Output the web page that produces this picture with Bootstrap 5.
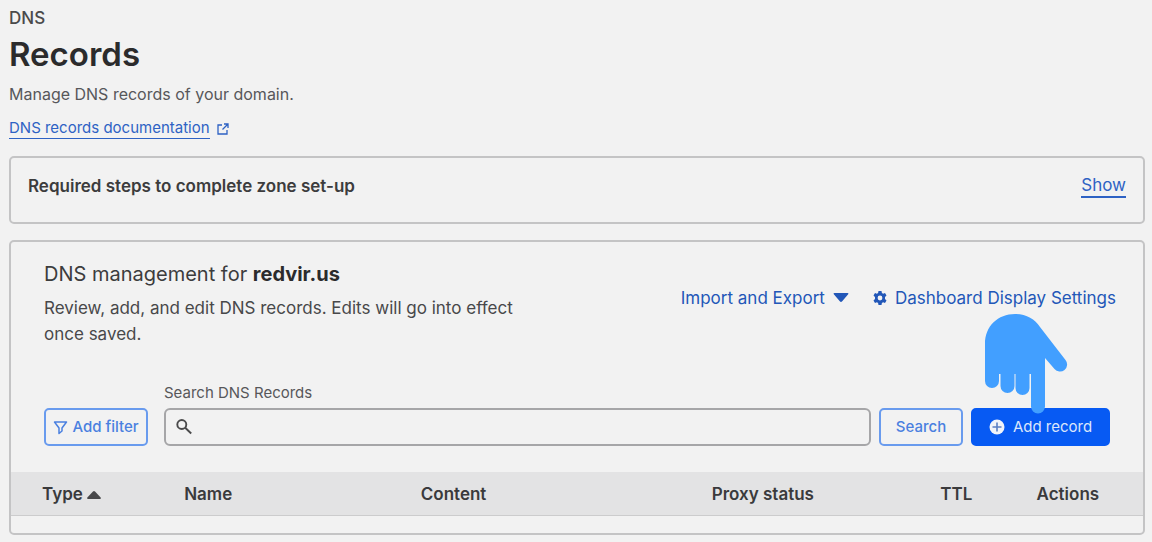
<!DOCTYPE html>
<html lang="en">
<head>
<meta charset="utf-8">
<meta name="viewport" content="width=device-width, initial-scale=1">
<title>DNS Records</title>
<link href="https://cdn.jsdelivr.net/npm/bootstrap@5.3.0/dist/css/bootstrap.min.css" rel="stylesheet">
<style>
  body { background: #f2f2f2; color: #3c3c3d; font-family: Inter, "Liberation Sans", sans-serif; font-size: 16px; line-height: 26px; }
  .page { padding: 8px 7px 7px 9px; }
  .crumb { font-size: 17px; font-weight: 500; line-height: 20px; color: #4a4a4b; }
  .page-title { font-size: 33px; font-weight: 600; line-height: 44px; margin: 4px 0 6px; color: #2b2b2c; }
  .intro { color: #57575a; line-height: 24px; }
  .doc-link, .show-link { color: #2e62c4; text-decoration: none; }
  .doc-link { font-size: 15px; gap: 7px; }
  .doc-link span, .show-link { border-bottom: 1px solid currentColor; }
  .doc-link span { display: inline-block; line-height: 20px; }
  .show-link { font-size: 17px; line-height: 22px; border-bottom-width: 2px; }
  .panel { background: transparent; border: 2px solid #c4c4c5; border-radius: 5px; }
  .steps { padding: 15px 17px 23px; line-height: 26px; }
  .steps h2 { font-size: 17px; font-weight: 600; line-height: 26px; }
  .manage-head { padding: 19px 27px 0 33px; }
  .manage-title { font-size: 20px; font-weight: 400; line-height: 26px; margin-bottom: 8px; }
  .manage-title strong { font-weight: 700; color: #2b2b2c; }
  .manage-text { max-width: 480px; color: #48484a; font-size: 17px; }
  .tools { padding-top: 25px; }
  .tool-link { border: 0; background: none; padding: 0; color: #2257b8; font-size: 17px; line-height: 24px; text-decoration: none; }
  .search-bar { padding: 36px 33px 26px 33px; }
  .search-label { font-size: 15px; line-height: 20px; color: #57575a; margin-bottom: 5px; }
  .box { border-radius: 6px; height: 38px; }
  .btn.box { --bs-btn-color: #4a80e0; --bs-btn-border-color: #699bee; font-size: 15px; line-height: 20px; padding: 0; border-width: 2px; border-radius: 5px; font-weight: 500; }
  .filter-btn { width: 104px; }
  .search-btn { width: 84px; }
  .btn.add-btn { width: 139px; --bs-btn-color: #dbe6fb; --bs-btn-bg: #075af3; --bs-btn-border-color: #075af3; font-weight: 400; }
  .search-field { background: transparent; border: 2px solid #a6a6a8; padding-left: 34px; }
  .search-icon { position: absolute; left: 12px; top: 11px; }
  .hand { position: absolute; left: 14px; bottom: 32px; pointer-events: none; z-index: 2; }
  .records { --bs-table-bg: transparent; table-layout: fixed; }
  .records th { background: #e3e3e4; color: #3a3a3c; border-bottom: 1px solid #cccccd; font-size: 17px; font-weight: 600; line-height: 24px; padding: 10px 0 9px; }
  .records td { height: 17px; padding: 0; border: 0; }
  .records .c-type { width: 15.3%; padding-left: 31px; }
  .records .c-name { width: 20.9%; }
  .records .c-content { width: 25.7%; }
  .records .c-proxy { width: 20.2%; }
  .records .c-ttl { width: 8.5%; }
</style>
</head>
<body>
<main class="page">
  <header>
    <div class="crumb">DNS</div>
    <h1 class="page-title">Records</h1>
    <p class="intro mb-2">Manage DNS records of your domain.</p>
    <a class="doc-link d-inline-flex align-items-center" href="#"><span>DNS records documentation</span>
      <svg width="12" height="12" viewBox="0 0 12 12" fill="none" stroke="currentColor" stroke-width="1.300"><path d="M5 2H1v9h9V7M7 1h4v4M11 1 5.500 6.500"/></svg>
    </a>
  </header>

  <section class="panel steps d-flex justify-content-between align-items-center mt-3">
    <h2 class="mb-0">Required steps to complete zone set-up</h2>
    <a class="show-link" href="#">Show</a>
  </section>

  <section class="panel mt-3">
    <div class="manage-head d-flex justify-content-between">
      <div>
        <h2 class="manage-title">DNS management for <strong>redvir.us</strong></h2>
        <p class="manage-text mb-0">Review, add, and edit DNS records. Edits will go into effect once saved.</p>
      </div>
      <div class="tools d-flex align-items-start gap-4">
        <button type="button" class="tool-link d-flex align-items-center">Import and Export
          <svg class="ms-2" width="16" height="10" viewBox="0 0 16 10" fill="currentColor"><path d="M1.500 0h13q1.500 0 .7 1.300L9.200 8.300Q8 9.700 6.800 8.300L.8 1.300Q0 0 1.500 0z"/></svg>
        </button>
        <a href="#" class="tool-link d-flex align-items-center">
          <svg class="me-2" width="14" height="14" viewBox="0 0 14 14" fill="currentColor" fill-rule="evenodd"><path d="M5.500 0h3l.4 2 1.200.7L12 2l1.500 2.600L12 6v2l1.500 1.400L12 12l-1.900-.7-1.200.7-.4 2h-3l-.4-2-1.200-.7L2 12 .5 9.400 2 8V6L.5 4.600 2 2l1.900.7L5.100 2zM7 4.600a2.400 2.400 0 1 0 0 4.800 2.400 2.400 0 0 0 0-4.800z"/></svg>
          Dashboard Display Settings</a>
      </div>
    </div>

    <form class="search-bar d-flex align-items-end">
      <button type="button" class="btn box filter-btn d-flex align-items-center justify-content-center flex-shrink-0 me-3">
        <svg class="me-1" width="15" height="15" viewBox="0 0 15 15" fill="none" stroke="currentColor" stroke-width="1.500" stroke-linejoin="round"><path d="M1.500 2h12L9 8v3l-3 2.500V8z"/></svg>
        Add filter</button>
      <div class="flex-grow-1">
        <label class="search-label d-block" for="q">Search DNS Records</label>
        <div class="position-relative">
          <svg class="search-icon" width="16" height="16" viewBox="0 0 16 16" fill="none" stroke="#4a4a4b" stroke-width="1.900"><circle cx="5.800" cy="5.500" r="4.500"/><path d="m9.200 8.800 6 5.700"/></svg>
          <input id="q" type="text" class="form-control box search-field">
        </div>
      </div>
      <button type="submit" class="btn box search-btn flex-shrink-0 ms-2 me-2">Search</button>
      <div class="position-relative flex-shrink-0">
        <button type="button" class="btn box add-btn d-flex align-items-center justify-content-center">
          <svg class="me-2" width="16" height="16" viewBox="0 0 16 16"><circle cx="8" cy="8" r="7.500" fill="#f1f4fa"/><path d="M8 3.500v9M3.500 8h9" stroke="#5b7fc4" stroke-width="1.600"/></svg>
          Add record</button>
        <svg class="hand" width="84" height="100" viewBox="0 0 84 100" fill="#429fff"><path d="M0 30C0 12 13 0 30 0c11 0 20 5 25 13l25.500 33a7 7 0 0 1-11 9L60 44v48.500a7 7 0 0 1-14 0V60h-1.500v14a7 7 0 0 1-14 0V60h-1v12a7 7 0 0 1-14 0V60H14v7a7 7 0 0 1-14 0z"/></svg>
      </div>
    </form>

    <table class="table records mb-0">
      <thead>
        <tr>
          <th class="c-type" scope="col">Type <svg width="14" height="8" viewBox="0 0 14 8" fill="#48484a"><path d="M6 .6q1-1 2 0l5.700 6q.6 1.400-.7 1.400H1q-1.300 0-.7-1.400z"/></svg></th>
          <th class="c-name" scope="col">Name</th>
          <th class="c-content" scope="col">Content</th>
          <th class="c-proxy" scope="col">Proxy status</th>
          <th class="c-ttl" scope="col">TTL</th>
          <th scope="col">Actions</th>
        </tr>
      </thead>
      <tbody><tr><td colspan="6"></td></tr></tbody>
    </table>
  </section>
</main>
<script src="https://cdn.jsdelivr.net/npm/bootstrap@5.3.0/dist/js/bootstrap.bundle.min.js"></script>
</body>
</html>
